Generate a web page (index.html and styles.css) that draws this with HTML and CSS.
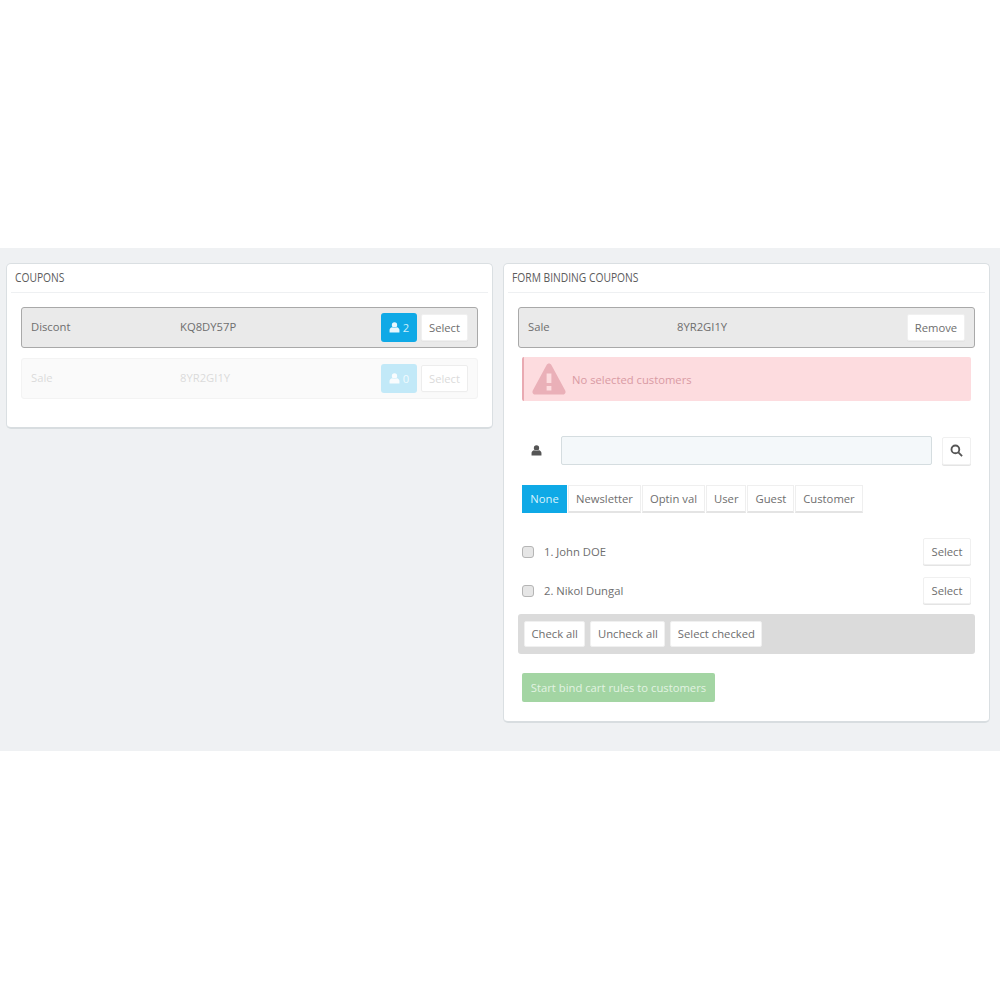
FILE: index.html
```html
<!DOCTYPE html>
<html lang="en">
<head>
    <meta charset="UTF-8">
    <title>Coupons</title>
    <link rel="stylesheet" href="styles.css">
</head>
<body>
    <div class="band">
        <div class="panel panel-left">
            <div class="panel-heading"><span class="heading-text">COUPONS</span></div>
            <div class="panel-body">
                <div class="coupon">
                    <span class="coupon-name">Discont</span>
                    <span class="coupon-code">KQ8DY57P</span>
                    <span class="count-btn">
                        <svg class="icon-user" viewBox="0 0 12 12"><circle cx="6" cy="3.2" r="2.9"/><path d="M0.6 11.4V8.6C0.6 6.9 2 5.9 3.4 5.6C4.8 6.7 7.2 6.7 8.6 5.6C10 5.9 11.4 6.9 11.4 8.6V11.4Z"/></svg>
                        2
                    </span>
                    <button class="btn btn-select">Select</button>
                </div>
                <div class="coupon coupon-off">
                    <span class="coupon-name">Sale</span>
                    <span class="coupon-code">8YR2GI1Y</span>
                    <span class="count-btn">
                        <svg class="icon-user" viewBox="0 0 12 12"><circle cx="6" cy="3.2" r="2.9"/><path d="M0.6 11.4V8.6C0.6 6.9 2 5.9 3.4 5.6C4.8 6.7 7.2 6.7 8.6 5.6C10 5.9 11.4 6.9 11.4 8.6V11.4Z"/></svg>
                        0
                    </span>
                    <button class="btn btn-select btn-outline">Select</button>
                </div>
            </div>
        </div>

        <div class="panel panel-right">
            <div class="panel-heading"><span class="heading-text">FORM BINDING COUPONS</span></div>
            <div class="panel-body">
                <div class="coupon">
                    <span class="coupon-name">Sale</span>
                    <span class="coupon-code">8YR2GI1Y</span>
                    <button class="btn btn-remove">Remove</button>
                </div>

                <div class="inner">
                    <div class="alert">
                        <svg class="icon-warning" viewBox="0 0 34 32"><path fill-rule="evenodd" d="M17 0.5C18 0.5 18.8 1 19.4 2L33.2 27.5C34.2 29.4 33 31.5 30.8 31.5H3.2C1 31.5 -0.2 29.4 0.8 27.5L14.6 2C15.2 1 16 0.5 17 0.5ZM14.6 10.5V20H19.4V10.5ZM14.6 23V27.5H19.4V23Z"/></svg>
                        <span>No selected customers</span>
                    </div>

                    <div class="search-row">
                        <svg class="icon-person" viewBox="0 0 12 12"><circle cx="6" cy="3.2" r="2.9"/><path d="M0.6 11.4V8.6C0.6 6.9 2 5.9 3.4 5.6C4.8 6.7 7.2 6.7 8.6 5.6C10 5.9 11.4 6.9 11.4 8.6V11.4Z"/></svg>
                        <input class="search-input" type="text">
                        <button class="btn btn-search">
                            <svg viewBox="0 0 14 14" class="icon-search"><circle cx="5.8" cy="5.8" r="4.2"/><path d="M9 9L13 13"/></svg>
                        </button>
                    </div>

                    <div class="tabs">
                        <span class="tab tab-active">None</span>
                        <span class="tab">Newsletter</span>
                        <span class="tab">Optin val</span>
                        <span class="tab">User</span>
                        <span class="tab">Guest</span>
                        <span class="tab">Customer</span>
                    </div>

                    <div class="customer">
                        <span class="check"></span>
                        <span class="customer-name">1. John DOE</span>
                        <button class="btn btn-customer">Select</button>
                    </div>
                    <div class="customer">
                        <span class="check"></span>
                        <span class="customer-name">2. Nikol Dungal</span>
                        <button class="btn btn-customer">Select</button>
                    </div>
                </div>

                <div class="toolbar">
                    <button class="btn btn-tool">Check all</button>
                    <button class="btn btn-tool">Uncheck all</button>
                    <button class="btn btn-tool">Select checked</button>
                </div>

                <div class="inner">
                    <button class="btn-start">Start bind cart rules to customers</button>
                </div>
            </div>
        </div>
    </div>
</body>
</html>
```

FILE: styles.css
```css
* {
    margin: 0;
    padding: 0;
    box-sizing: border-box;
}

body {
    font-family: 'Open Sans', 'Noto Sans', sans-serif;
    font-size: 11.25px;
    color: #6e6e6e;
    background: #fff;
    padding-top: 248px;
    height: 1000px;
}

button {
    font-family: inherit;
    font-size: 11.25px;
    color: #6e6e6e;
}

.band {
    display: flex;
    align-items: flex-start;
    gap: 10px;
    height: 503px;
    padding: 15px 10px 0 6px;
    background: #eff1f3;
}

.panel {
    width: 487px;
    background: #fff;
    border: 1px solid #dadfe2;
    border-bottom: 2px solid #d8dde0;
    border-radius: 5px;
}

.panel-left {
    height: 166px;
}

.panel-right {
    height: 460px;
}

.panel-heading {
    height: 29px;
    margin: 0 4px;
    padding: 5px 4px 0;
    border-bottom: 1px solid #eef0f2;
    font-size: 13px;
    line-height: 17px;
    color: #5c5c5c;
}

.heading-text {
    display: inline-block;
    white-space: nowrap;
    transform: scaleX(0.79);
    transform-origin: left center;
}

.panel-body {
    padding: 14px 14px 0;
}

.coupon {
    display: flex;
    align-items: center;
    height: 41px;
    margin-bottom: 10px;
    padding: 0 9px;
    background: #eaeaea;
    border: 1px solid #a9a9a9;
    border-radius: 3px;
}

.coupon-off {
    opacity: 0.25;
    border-color: #d0d0d0;
    background: #ececec;
}

.coupon-name {
    width: 149px;
    padding-bottom: 2px;
}

.coupon-code {
    flex: 1;
    padding-bottom: 2px;
}

.btn {
    background: #fff;
    border: 1px solid #f0f0f0;
    border-radius: 2px;
    box-shadow: 0 1px 0 #e4e4e4;
}

.count-btn {
    display: flex;
    align-items: center;
    justify-content: center;
    gap: 3px;
    width: 36px;
    height: 29px;
    margin-right: 4px;
    background: #0fa9e6;
    border-radius: 3px;
    color: #cdeefb;
}

.icon-user {
    width: 11px;
    height: 11px;
    fill: #e8f7fd;
}

.btn-select {
    width: 47px;
    height: 27px;
}

.btn-outline {
    border: 1px solid #bbb;
}

.btn-remove {
    width: 58px;
    height: 27px;
}

.inner {
    padding: 0 4px;
}

.alert {
    display: flex;
    align-items: center;
    gap: 6px;
    height: 44px;
    margin-top: -1px;
    padding-left: 8px;
    background: #fddcdf;
    border-left: 2px solid #e9aab2;
    border-radius: 2px;
    color: #d99aa3;
}

.icon-warning {
    width: 34px;
    height: 32px;
    fill: #eab0b8;
}

.search-row {
    display: flex;
    align-items: center;
    margin-top: 35px;
    padding-left: 9px;
}

.icon-person {
    width: 11px;
    height: 11px;
    margin-right: 19px;
    fill: #555;
}

.search-input {
    width: 371px;
    height: 29px;
    margin-right: 10px;
    background: #f4f8fa;
    border: 1px solid #d5dde0;
    border-radius: 2px;
}

.btn-search {
    display: flex;
    align-items: center;
    justify-content: center;
    width: 29px;
    height: 28px;
}

.icon-search {
    width: 13px;
    height: 13px;
    fill: none;
    stroke: #555;
    stroke-width: 2;
}

.tabs {
    display: flex;
    gap: 1px;
    height: 28px;
    margin-top: 20px;
}

.tab {
    display: flex;
    align-items: center;
    justify-content: center;
    padding: 0 7px;
    background: #fff;
    border: 1px solid #efefef;
    border-bottom: 2px solid #e4e4e4;
}

.tab-active {
    width: 45px;
    padding: 0;
    background: #0fa9e6;
    border-color: #0fa9e6;
    color: #d8f3fd;
}

.customer {
    display: flex;
    align-items: center;
    height: 27px;
    margin-top: 12px;
}

.tabs + .customer {
    margin-top: 25px;
}

.check {
    width: 12px;
    height: 12px;
    margin-right: 10px;
    background: #e6e6e6;
    border: 1px solid #b5b5b5;
    border-radius: 3px;
}

.customer-name {
    flex: 1;
}

.btn-customer {
    width: 48px;
    height: 27px;
}

.toolbar {
    display: flex;
    align-items: center;
    gap: 5px;
    height: 40px;
    margin-top: 10px;
    margin-bottom: 19px;
    padding-left: 6px;
    background: #dbdbdb;
    border-radius: 3px;
}

.btn-tool {
    height: 26px;
    padding: 0 6.5px 2px;
    box-shadow: none;
}

.btn-start {
    width: 193px;
    height: 29px;
    background: #a3d5a3;
    border: none;
    border-radius: 2px;
    color: #e2f3e2;
}
```
